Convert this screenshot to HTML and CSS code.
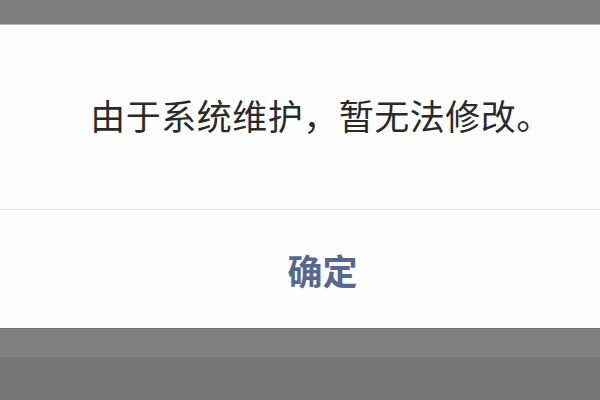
FILE: index.html
```html
<!DOCTYPE html>
<html lang="zh-CN">
  <head>
    <meta charset="UTF-8" />
    <meta name="viewport" content="width=device-width, initial-scale=1.0" />
    <title>提示</title>
    <link rel="stylesheet" href="styles.css">
  </head>
  <body>
    <div class="mask-top"></div>
    <div class="dialog">
      <div class="dialog-body">由于系统维护，暂无法修改。</div>
      <div class="dialog-footer">
        <a class="btn-ok" href="#">确定</a>
      </div>
    </div>
    <div class="mask-bottom"></div>
    <div class="mask-tab"></div>
  </body>
</html>
```

FILE: styles.css
```css
html,
body {
  margin: 0;
  padding: 0;
  height: 100%;
}
body {
  font-family: "Noto Sans CJK SC", "Noto Sans", sans-serif;
  background-color: #777777;
  overflow: hidden;
}
.mask-top {
  height: 25px;
  background-color: #7f7f7f;
  border-bottom: 1px solid #b5b5b5;
  box-sizing: border-box;
}
.dialog {
  background: #fefefe;
  height: 303px;
  display: flex;
  flex-direction: column;
}
.dialog-body {
  height: 184px;
  display: flex;
  align-items: center;
  justify-content: center;
  padding-left: 42px;
  padding-bottom: 6px;
  box-sizing: border-box;
  font-size: 35px;
  color: #2a2a2a;
  letter-spacing: 0.5px;
}
.dialog-footer {
  flex: 1;
  display: flex;
  align-items: center;
  justify-content: center;
  border-top: 1px solid #e4e4e4;
  padding-left: 45px;
}
.btn-ok {
  font-size: 35px;
  font-weight: bold;
  color: #566890;
  text-decoration: none;
}
.mask-bottom {
  height: 29px;
  background-color: #808080;
  border-top: 1px solid #6f6f6f;
  border-bottom: 2px solid #868686;
  box-sizing: border-box;
}
.mask-tab {
  height: 43px;
  background-color: #767676;
}
```
